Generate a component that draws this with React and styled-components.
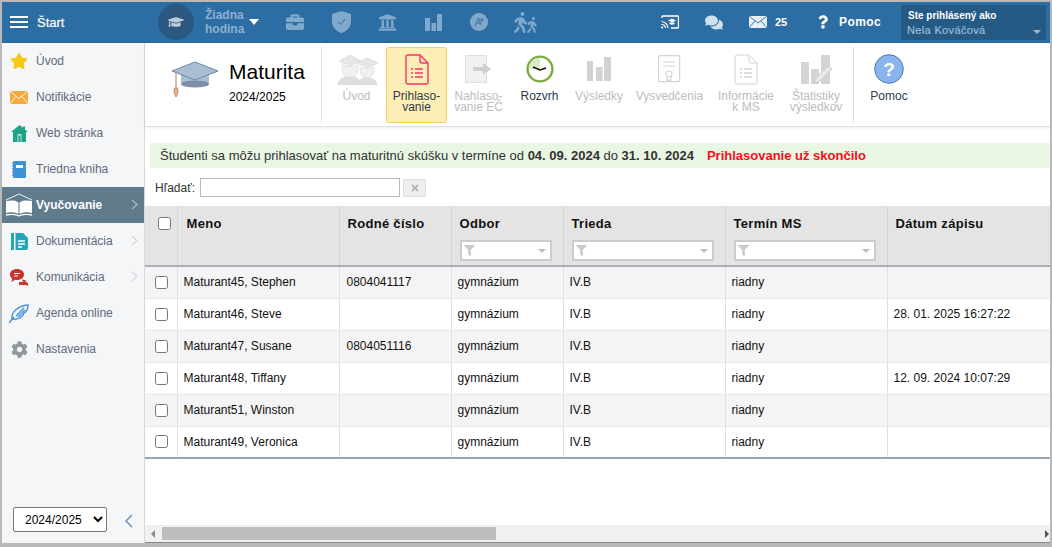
import React from "react";
import styled, { createGlobalStyle } from "styled-components";
import { FaBriefcase, FaUniversity, FaComments, FaGraduationCap, FaWalking, FaStar, FaCog, FaQuestion, FaTimes, FaFilter } from "react-icons/fa";

const Global = createGlobalStyle`
  html, body { margin: 0; padding: 0; height: 100%; overflow: hidden; background: #b9b9b9; }
  #root { height: 100%; }
  * { box-sizing: border-box; }
`;
const Shell = styled.div`
  width: 1052px; height: 547px; padding: 2px 2px 4px 2px; background: #b9b9b9;
  display: flex; flex-direction: column; font-family: "Liberation Sans", Arial, sans-serif; font-size: 12px; color: #111;
`;
const TopBar = styled.header`
  height: 41px; flex: none; background: #2c6da3; display: flex; align-items: center; color: #fff; border-bottom: 1px solid #2a6497;
`;
const Burger = styled.div`
  width: 18px; margin-left: 8px; display: flex; flex-direction: column; gap: 3px;
  span { display: block; height: 2px; background: #fff; }
`;
const StartLabel = styled.div` font-weight: 400; font-size: 13px; margin-left: 9px; width: 121px; -webkit-text-stroke: .2px #fff; `;
const Hour = styled.div`
  width: 36px; height: 36px; border-radius: 50%; background: #2b587e; display: flex; align-items: center; justify-content: center; color: #b9cddd;
`;
const HourText = styled.div` margin-left: 11px; width: 44px; font-weight: 700; font-size: 12px; line-height: 14px; color: #8db1d0; `;
const HourCaret = styled.div` width: 0; height: 0; border-left: 5px solid transparent; border-right: 5px solid transparent; border-top: 6px solid #fff; margin-right: 13px; `;
const NavSlot = styled.div` width: 46px; display: flex; justify-content: center; align-items: center; color: #80a9cc; `;
const RightGroup = styled.div` margin-left: auto; display: flex; align-items: center; `;
const RightIcon = styled.div` display: flex; align-items: center; justify-content: center; width: ${p => p.$w}px; margin-right: ${p => p.$mr}px; color: #cfe0ee; `;
const Count = styled.div` font-size: 11px; font-weight: 700; width: 43px; `;
const HelpLabel = styled.div` font-size: 12px; font-weight: 700; letter-spacing: .4px; width: 62px; `;
const UserBox = styled.div`
  width: 145px; height: 35px; background: #245a83; border-radius: 2px; margin-right: 4px; padding: 4px 7px 4px 6px; position: relative; line-height: 14px;
`;
const UserTop = styled.div` font-size: 10px; font-weight: 700; color: #fff; padding-left: 1px; `;
const UserName = styled.div` font-size: 11px; font-weight: 400; color: #9cbcd8; letter-spacing: .35px; -webkit-text-stroke: .2px #9cbcd8; `;
const UserCaret = styled.div`
  position: absolute; right: 5px; top: 25px; width: 0; height: 0; border-left: 4px solid transparent; border-right: 4px solid transparent; border-top: 4px solid #9db9d2;
`;
const Body = styled.div` flex: 1; display: flex; min-height: 0; `;
const Side = styled.nav`
  width: 143px; flex: none; background: #f4f6f8; border-right: 1px solid #d6d8da; display: flex; flex-direction: column;
`;
const SideItem = styled.div`
  height: 36px; display: flex; align-items: center; position: relative; color: ${p => p.$active ? "#fff" : "#5f6a7c"}; background: ${p => p.$active ? "#5f7b8c" : "transparent"};
  font-weight: ${p => p.$active ? 700 : 400}; font-size: 12px;
`;
const SideIcon = styled.div` width: 34px; flex: none; display: flex; justify-content: center; align-items: center; `;
const SideChevron = styled.svg` position: absolute; left: 129px; top: 12px; color: ${p => p.$active ? "#a8bbc6" : "#d4d8dc"}; `;
const SideFoot = styled.div` margin-top: auto; display: flex; align-items: center; padding: 0 0 11px 11px; `;
const YearSelect = styled.select`
  width: 94px; height: 25px; font-family: "Liberation Sans", Arial, sans-serif; font-size: 12px; padding-left: 7px; background: #fff; color: #000; border: 1px solid #767676; border-radius: 2px;
`;
const Collapse = styled.svg` margin-left: 17px; margin-top: 3px; color: #6f94b5; flex: none; `;
const Main = styled.main` flex: 1; display: flex; flex-direction: column; min-width: 0; background: #fff; border-bottom: 1px solid #7e8b97; `;
const Toolbar = styled.div`
  height: 84px; flex: none; display: flex; border-bottom: 1px solid #e2e2e2; box-shadow: 0 1px 2px rgba(0,0,0,.08); padding-top: 4px; padding-bottom: 3px;
`;
const Brand = styled.div` width: 176px; flex: none; display: flex; padding: 0 0 0 26px; align-items: flex-start; `;
const BrandIcon = styled.div` margin-top: 14px; width: 58px; flex: none; `;
const BrandText = styled.div` padding-top: 13px; `;
const BrandTitle = styled.div` font-size: 21px; line-height: 24px; color: #000; `;
const BrandYear = styled.div` font-size: 12px; line-height: 14px; margin-top: 6px; color: #000; `;
const Sep = styled.div` width: 1px; background: #ddd; flex: none; margin-left: ${p => p.$ml || 0}px; margin-right: ${p => p.$mr}px; `;
const Tool = styled.div`
  width: ${p => p.$w}px; flex: none; display: flex; flex-direction: column; align-items: center; text-align: center; padding-top: ${p => p.$on ? 4 : 5}px;
  font-size: 12px; line-height: 11px; color: ${p => p.$off ? "#bdbdbd" : "#2e3a4c"}; border-radius: 3px;
  background: ${p => p.$on ? "#fdeeb5" : "transparent"}; border: ${p => p.$on ? "1px solid #f3cf5a" : "0"};
  white-space: pre-line;
`;
const ToolIcon = styled.div` height: 34px; display: flex; align-items: center; justify-content: center; margin-bottom: 5px; `;
const Notice = styled.div`
  margin: 16px 0 0 5px; height: 25px; background: #e9f6e3; display: flex; align-items: center; padding-left: 10px; font-size: 13px; color: #333; white-space: pre; flex: none;
  b { color: #333; }
`;
const Late = styled.span` color: #f50f1e; font-weight: 700; margin-left: 13px; `;
const SearchRow = styled.div` display: flex; align-items: center; height: 19px; margin-top: 10px; padding-left: 10px; flex: none; color: #333; `;
const SearchInput = styled.input` width: 200px; height: 19px; margin-left: 5px; border: 1px solid #bbb; background: #fff; padding: 0; outline: 0; `;
const ClearBtn = styled.div` width: 23px; height: 18px; margin-left: 3px; background: #eee; border: 1px solid #ddd; color: #b4b4b4; display: flex; align-items: center; justify-content: center; border-radius: 1px; `;
const TableWrap = styled.div` margin-top: 9px; flex: 1; min-height: 0; overflow: hidden; `;
const Table = styled.table`
  width: 905px; table-layout: fixed; border-collapse: collapse; font-size: 12px; border-bottom: 2px solid #98a6b3;
`;
const HeadCell = styled.th`
  height: 60px; background: #e4e4e4; vertical-align: top; text-align: left; font-size: 13px; font-weight: 700; letter-spacing: .3px; color: #111; padding: 10px 8px 0; border-left: 1px solid #d6d6d6; border-bottom: 2px solid #a9b0b8;
  &:nth-child(2) { padding-left: 9px; }
  &:first-child { border-left: 0; padding: 11px 0 0 13px; }
`;
const Check = styled.input.attrs({ type: "checkbox" })` margin: 0; width: 13px; height: 13px; display: block; `;
const Filter = styled.div`
  height: 21px; width: ${p => p.$w}px; background: #fff; border: 2px solid #ccc; margin-top: 9px; display: flex; align-items: center; justify-content: space-between; padding: 0 4px 0 2px; color: #c6cdd4;
`;
const SmallCaret = styled.div` width: 0; height: 0; border-left: 4px solid transparent; border-right: 4px solid transparent; border-top: 4px solid #bbb; `;
const Row = styled.tr` height: 32px; background: ${p => p.$odd ? "#f4f4f4" : "#fff"}; `;
const Cell = styled.td`
  padding: 0 6px; border-left: 1px solid #e0e0e0; border-bottom: 1px solid #e8e8e8; color: #111; white-space: nowrap; overflow: hidden;
  &:nth-child(3) { padding-left: 7px; }
  &:first-child { border-left: 0; padding: 0 0 0 10px; }
`;
const Scroll = styled.div` height: 17px; flex: none; background: #f0f0f0; display: flex; align-items: center; `;
const ScrollArrow = styled.div`
  width: 0; height: 0; border-top: 4px solid transparent; border-bottom: 4px solid transparent; flex: none;
  ${p => p.$left ? "border-right: 4px solid #8a8a8a; margin-left: 6px;" : "border-left: 4px solid #555; margin-left: auto; margin-right: 1px;"}
`;
const Thumb = styled.div` width: 334px; height: 13px; background: #bdbdbd; margin-left: 7px; `;

const Cap = () => (
  <svg width="48" height="38" viewBox="0 0 48 38">
    <path d="M10 12v10c0 4 28 4 28 0V12z" fill="#a9bdd3"/>
    <ellipse cx="24" cy="23" rx="14" ry="3.6" fill="#7d8fa8"/>
    <path d="M1 10 24 1l23 9-23 9z" fill="#a9bdd3" stroke="#6d87a5" strokeWidth="1"/>
    <path d="M5 10v17" stroke="#c98f6c" strokeWidth="1.2"/>
    <path d="M3.500 27h3l.6 4-2.100 5-2-5z" fill="#e6b595" stroke="#b9764f" strokeWidth=".8"/>
  </svg>
);
const Heads = () => (
  <svg width="44" height="32" viewBox="0 0 44 32">
    <g fill="#e6e6e6" stroke="#d8d8d8" strokeWidth=".7">
      <path d="M4 8 15 2l11 6-11 5z"/><path d="M7 12c0 9 3 13 8 13s8-4 8-13c-5 2-11 2-16 0z" fill="#f0f0f0"/>
      <path d="M3 32c0-6 5-8 12-8s11 2 11 8z" fill="#dedede"/>
      <path d="M22 10 32 5l11 5-11 5z"/><path d="M25 14c0 8 3 11 7 11s7-3 7-11c-4 2-10 2-14 0z" fill="#f0f0f0"/>
      <path d="M23 32c0-5 4-7 9-7s10 2 10 7z" fill="#dedede"/>
    </g>
  </svg>
);
const DocList = ({ c, w = 1.4 }) => (
  <svg width="24" height="31" viewBox="0 0 24 31" fill="none">
    <path d="M3 1h12l8 8v19a2 2 0 0 1-2 2H3a2 2 0 0 1-2-2V3a2 2 0 0 1 2-2z" stroke={c} strokeWidth={w}/>
    <path d="M15 1v6a2 2 0 0 0 2 2h6" stroke={c} strokeWidth={w}/>
    <path d="M6 15h2M10 15h8M6 19h2M10 19h8M6 23h2M10 23h8" stroke={c} strokeWidth="1.600"/>
  </svg>
);
const ArrowDoc = () => (
  <svg width="27" height="28" viewBox="0 0 27 28">
    <rect x=".5" y=".5" width="21" height="27" fill="#f1f1f1" stroke="#dedede"/>
    <path d="M8 12h10V8l8 6-8 6v-4H8z" fill="#cfcfcf"/>
  </svg>
);
const Clock = () => (
  <svg width="28" height="28" viewBox="0 0 28 28">
    <circle cx="14" cy="14" r="12.400" fill="#fff" stroke="#7bab3f" strokeWidth="2.400"/>
    <path d="M14 2.800A11.200 11.200 0 0 0 2.800 14H14z" fill="#d9e9c6"/>
    <path d="M7 12l7 3 6-2" fill="none" stroke="#111" strokeWidth="1.500"/>
  </svg>
);
const Bars = () => (
  <svg width="25" height="25" viewBox="0 0 25 25" fill="#d2d2d2">
    <rect x="0" y="4" width="6" height="20"/><rect x="9" y="10" width="6.500" height="14"/><rect x="17" y="0" width="7" height="24"/>
  </svg>
);
const Diploma = () => (
  <svg width="23" height="28" viewBox="0 0 23 28" fill="none" stroke="#d4d4d4" strokeWidth="1.200">
    <rect x=".6" y=".6" width="21" height="26" rx="1"/>
    <path d="M5 7h12M5 11h12"/>
    <circle cx="11" cy="19" r="3"/><path d="M9 22v4l2-1 2 1v-4"/>
  </svg>
);
const BarsPen = () => (
  <svg width="32" height="31" viewBox="0 0 32 31">
    <g fill="#d4d4d4"><rect x="1" y="8" width="8" height="22"/><rect x="11" y="15" width="8" height="15"/><rect x="21" y="1" width="9" height="29"/></g>
    <path d="M14 30l2-6 12-12 4 3-12 12z" fill="#e8e8e8" stroke="#c8c8c8"/>
  </svg>
);
const Help = () => (
  <svg width="30" height="30" viewBox="0 0 30 30">
    <circle cx="15" cy="15" r="14.300" fill="#8ab4ee" stroke="#4f79b4"/>
    <text x="15" y="21.500" textAnchor="middle" fontSize="19" fontWeight="700" fontFamily="Liberation Sans" fill="#fff">?</text>
  </svg>
);
const Shield = () => (
  <svg width="19" height="22" viewBox="0 0 19 22">
    <path d="M9.500 0 19 3v7c0 6-4 10-9.500 12C4 20 0 16 0 10V3z" fill="currentColor"/>
    <path d="M6 11l2.500 2.500L13 8" fill="none" stroke="#2c6da3" strokeWidth="1"/>
  </svg>
);
const ChartTop = () => (
  <svg width="17" height="17" viewBox="0 0 17 17" fill="currentColor">
    <rect x="0" y="4" width="5" height="13"/><rect x="6.500" y="9" width="4.500" height="8"/><rect x="12" y="0" width="5" height="17"/>
  </svg>
);
const GradeCircle = () => (
  <svg width="18" height="18" viewBox="0 0 18 18">
    <circle cx="9" cy="9" r="9" fill="currentColor"/>
    <path d="M5 13 8.500 5 11 12M6.500 10h4M12 5v4M10 7h4" fill="none" stroke="#2c6da3" strokeWidth=".9"/>
  </svg>
);
const Cast = () => (
  <svg width="18" height="14" viewBox="0 0 18 14" fill="none" stroke="#fff">
    <path d="M1 3V1.500A.8.8 0 0 1 1.800 1h15a.8.8 0 0 1 .7.7v10.600a.8.8 0 0 1-.7.7H10" strokeWidth="1.300"/>
    <path d="M.5 6.500A7 7 0 0 1 7 13M.5 9.500A4 4 0 0 1 4.500 13" strokeWidth="1.200"/>
    <circle cx="1.200" cy="12.600" r="1" fill="#fff" stroke="none"/>
    <path d="M7 5.500 11 3.500l4 2-4 2z" fill="#fff" stroke="none"/><path d="M8.500 7.500v1.500c1.500 1 3.500 1 5 0V7.500" fill="#fff" stroke="none"/>
  </svg>
);
const Mail = ({ bg, line, w = 18, h = 12 }) => (
  <svg width={w} height={h} viewBox="0 0 18 12" preserveAspectRatio="none">
    <rect width="18" height="12" fill={bg}/>
    <path d="M0 0l9 7 9-7M0 12l6-7M18 12l-6-7" fill="none" stroke={line} strokeWidth=".9"/>
  </svg>
);
const HomeIcon = () => (
  <svg width="17" height="17" viewBox="0 0 17 17">
    <path d="M8.500 0 12 2.800V1.500h2v3L17 7h-2v10H2V7H0z" fill="#1fa386"/>
    <rect x="6.500" y="9" width="4" height="8" fill="#bfe5dc"/><rect x="7.500" y="10.500" width="2" height="6.500" fill="#1fa386"/>
  </svg>
);
const Notebook = () => (
  <svg width="14" height="17" viewBox="0 0 14 17">
    <rect x="1" y="0" width="13" height="17" rx="1" fill="#3f92d6"/>
    <rect x="4" y="4" width="7" height="3" fill="#fff"/>
    <path d="M1 2H0M1 5H0M1 8H0M1 11H0M1 14H0" stroke="#1f6fb0"/>
  </svg>
);
const BookIcon = () => (
  <svg width="28" height="25" viewBox="0 0 28 25">
    <path d="M1 7 14 1l13 6" fill="none" stroke="#fff" strokeWidth=".9"/>
    <path d="M1 8c5-1 10-1 12.500 1.500V21C10 19 5 19 1 20zM27 8c-5-1-10-1-12.500 1.500V21C18 19 23 19 27 20z" fill="#fff"/>
    <path d="M1 22c5-1 10-1 13 1 3-2 8-2 13-1" fill="none" stroke="#fff" strokeWidth="1.300"/>
  </svg>
);
const DocTeal = () => (
  <svg width="17" height="17" viewBox="0 0 17 17">
    <rect x="0" y="0" width="3" height="17" fill="#27a5b8"/>
    <path d="M4.500 0H12l5 5v10a2 2 0 0 1-2 2H4.500z" fill="#27a5b8"/>
    <path d="M7 8h7M7 11h7M7 14h4" stroke="#fff" strokeWidth="1.300"/>
  </svg>
);
const ChatRed = () => (
  <svg width="18" height="17" viewBox="0 0 18 17">
    <path d="M9 13h6c2 0 3 1 3 2v2l-2-1H9z" fill="#c5352c"/>
    <path d="M7 0c4 0 7 2.300 7 5.500S11 11 7 11c-.8 0-1.500 0-2-.2L1.500 13l.7-3.400C.8 8.600 0 7.200 0 5.500 0 2.300 3 0 7 0z" fill="#c5352c"/>
    <path d="M4 4.500h6M4 7h4" stroke="#fff" strokeWidth="1"/>
    <path d="M12 10.500c2 0 4 .8 5 2l-4 .5z" fill="#c5352c"/>
  </svg>
);
const Feather = () => (
  <svg width="20" height="19" viewBox="0 0 20 19" fill="none" stroke="#4f93d6" strokeWidth="1.500">
    <path d="M0 19 5 13M3 15C2 8 9 2 19 1c0 4-2 7-4 8-1 4-6 7-12 6z"/>
    <path d="M7 12 15 4M9 13 16 6"/>
  </svg>
);
const Chevron = ({ active }) => (
  <SideChevron $active={active} width="7" height="11" viewBox="0 0 7 11" fill="none" stroke="currentColor" strokeWidth="1.200">
    <path d="M1 1l5 4.500L1 10" />
  </SideChevron>
);

const tools = [
  { w: 59, label: "Úvod", off: 1, icon: <Heads /> },
  { w: 61, label: "Prihlaso-\nvanie", on: 1, icon: <DocList c="#f0386b" /> },
  { w: 63, label: "Nahlaso-\nvanie EČ", off: 1, icon: <ArrowDoc /> },
  { w: 59, label: "Rozvrh", icon: <Clock /> },
  { w: 60, label: "Výsledky", off: 1, icon: <Bars /> },
  { w: 81, label: "Vysvedčenia", off: 1, icon: <Diploma /> },
  { w: 72, label: "Informácie\nk MS", off: 1, icon: <DocList c="#d4d4d4" w={1} /> },
  { w: 68, label: "Štatistiky\nvýsledkov", off: 1, icon: <BarsPen /> },
];
const side = [
  { t: "Úvod", i: <FaStar size={18} color="#f6c915" /> },
  { t: "Notifikácie", i: <Mail bg="#f5a93a" line="#fff" w={18} h={13} /> },
  { t: "Web stránka", i: <HomeIcon /> },
  { t: "Triedna kniha", i: <Notebook /> },
  { t: "Vyučovanie", i: <BookIcon />, active: 1, chev: 1 },
  { t: "Dokumentácia", i: <DocTeal />, chev: 1 },
  { t: "Komunikácia", i: <ChatRed />, chev: 1 },
  { t: "Agenda online", i: <Feather /> },
  { t: "Nastavenia", i: <FaCog size={17} color="#8d979c" /> },
];
const rows = [
  ["Maturant45, Stephen", "0804041117", ""],
  ["Maturant46, Steve", "", "28. 01. 2025 16:27:22"],
  ["Maturant47, Susane", "0804051116", ""],
  ["Maturant48, Tiffany", "", "12. 09. 2024 10:07:29"],
  ["Maturant51, Winston", "", ""],
  ["Maturant49, Veronica", "", ""],
];

const FilterBox = ({ w }) => (
  <Filter $w={w}><FaFilter size={11} /><SmallCaret /></Filter>
);

export default function App() {
  return (
    <Shell>
      <Global />
      <TopBar>
        <Burger><span /><span /><span /></Burger>
        <StartLabel>Štart</StartLabel>
        <Hour><FaGraduationCap size={16} /></Hour>
        <HourText>Žiadna hodina</HourText>
        <HourCaret />
        <NavSlot><FaBriefcase size={18} /></NavSlot>
        <NavSlot><Shield /></NavSlot>
        <NavSlot><FaUniversity size={19} /></NavSlot>
        <NavSlot><ChartTop /></NavSlot>
        <NavSlot><GradeCircle /></NavSlot>
        <NavSlot><FaWalking size={21} /><FaWalking size={16} style={{ marginLeft: -7, marginTop: 5 }} /></NavSlot>
        <RightGroup>
          <RightIcon $w={18} $mr={26}><Cast /></RightIcon>
          <RightIcon $w={18} $mr={26}><FaComments size={19} /></RightIcon>
          <RightIcon $w={18} $mr={8}><Mail bg="#e8f0f6" line="#2c6da3" /></RightIcon>
          <Count>25</Count>
          <RightIcon $w={10} $mr={11}><FaQuestion size={14} color="#fff" /></RightIcon>
          <HelpLabel>Pomoc</HelpLabel>
          <UserBox>
            <UserTop>Ste prihlásený ako</UserTop>
            <UserName>Nela Kováčová</UserName>
            <UserCaret />
          </UserBox>
        </RightGroup>
      </TopBar>
      <Body>
        <Side>
          {side.map(s => (
            <SideItem key={s.t} $active={s.active}>
              <SideIcon>{s.i}</SideIcon>
              {s.t}
              {s.chev ? <Chevron active={s.active} /> : null}
            </SideItem>
          ))}
          <SideFoot>
            <YearSelect defaultValue="2024/2025"><option>2024/2025</option></YearSelect>
            <Collapse width="9" height="14" viewBox="0 0 9 14" fill="none" stroke="currentColor" strokeWidth="1.500"><path d="M8 1 2 7l6 6" /></Collapse>
          </SideFoot>
        </Side>
        <Main>
          <Toolbar>
            <Brand>
              <BrandIcon><Cap /></BrandIcon>
              <BrandText>
                <BrandTitle>Maturita</BrandTitle>
                <BrandYear>2024/2025</BrandYear>
              </BrandText>
            </Brand>
            <Sep $mr={5} />
            {tools.map(t => (
              <Tool key={t.label} $w={t.w} $off={t.off} $on={t.on}>
                <ToolIcon>{t.icon}</ToolIcon>
                {t.label}
              </Tool>
            ))}
            <Sep $ml={3} $mr={5} />
            <Tool $w={60}><ToolIcon><Help /></ToolIcon>Pomoc</Tool>
          </Toolbar>
          <Notice>Študenti sa môžu prihlasovať na maturitnú skúšku v termíne od <b>04. 09. 2024</b> do <b>31. 10. 2024</b><Late>Prihlasovanie už skončilo</Late></Notice>
          <SearchRow>Hľadať:<SearchInput /><ClearBtn><FaTimes size={10} /></ClearBtn></SearchRow>
          <TableWrap>
            <Table>
              <colgroup>
                <col style={{ width: 32 }} /><col style={{ width: 162 }} /><col style={{ width: 112 }} /><col style={{ width: 112 }} /><col style={{ width: 162 }} /><col style={{ width: 162 }} /><col />
              </colgroup>
              <thead>
                <tr>
                  <HeadCell><Check /></HeadCell>
                  <HeadCell>Meno</HeadCell>
                  <HeadCell>Rodné číslo</HeadCell>
                  <HeadCell>Odbor<FilterBox w={92} /></HeadCell>
                  <HeadCell>Trieda<FilterBox w={142} /></HeadCell>
                  <HeadCell>Termín MS<FilterBox w={142} /></HeadCell>
                  <HeadCell>Dátum zápisu</HeadCell>
                </tr>
              </thead>
              <tbody>
                {rows.map((r, i) => (
                  <Row key={r[0]} $odd={i % 2 === 0}>
                    <Cell><Check /></Cell>
                    <Cell>{r[0]}</Cell>
                    <Cell>{r[1]}</Cell>
                    <Cell>gymnázium</Cell>
                    <Cell>IV.B</Cell>
                    <Cell>riadny</Cell>
                    <Cell>{r[2]}</Cell>
                  </Row>
                ))}
              </tbody>
            </Table>
          </TableWrap>
          <Scroll><ScrollArrow $left /><Thumb /><ScrollArrow /></Scroll>
        </Main>
      </Body>
    </Shell>
  );
}
